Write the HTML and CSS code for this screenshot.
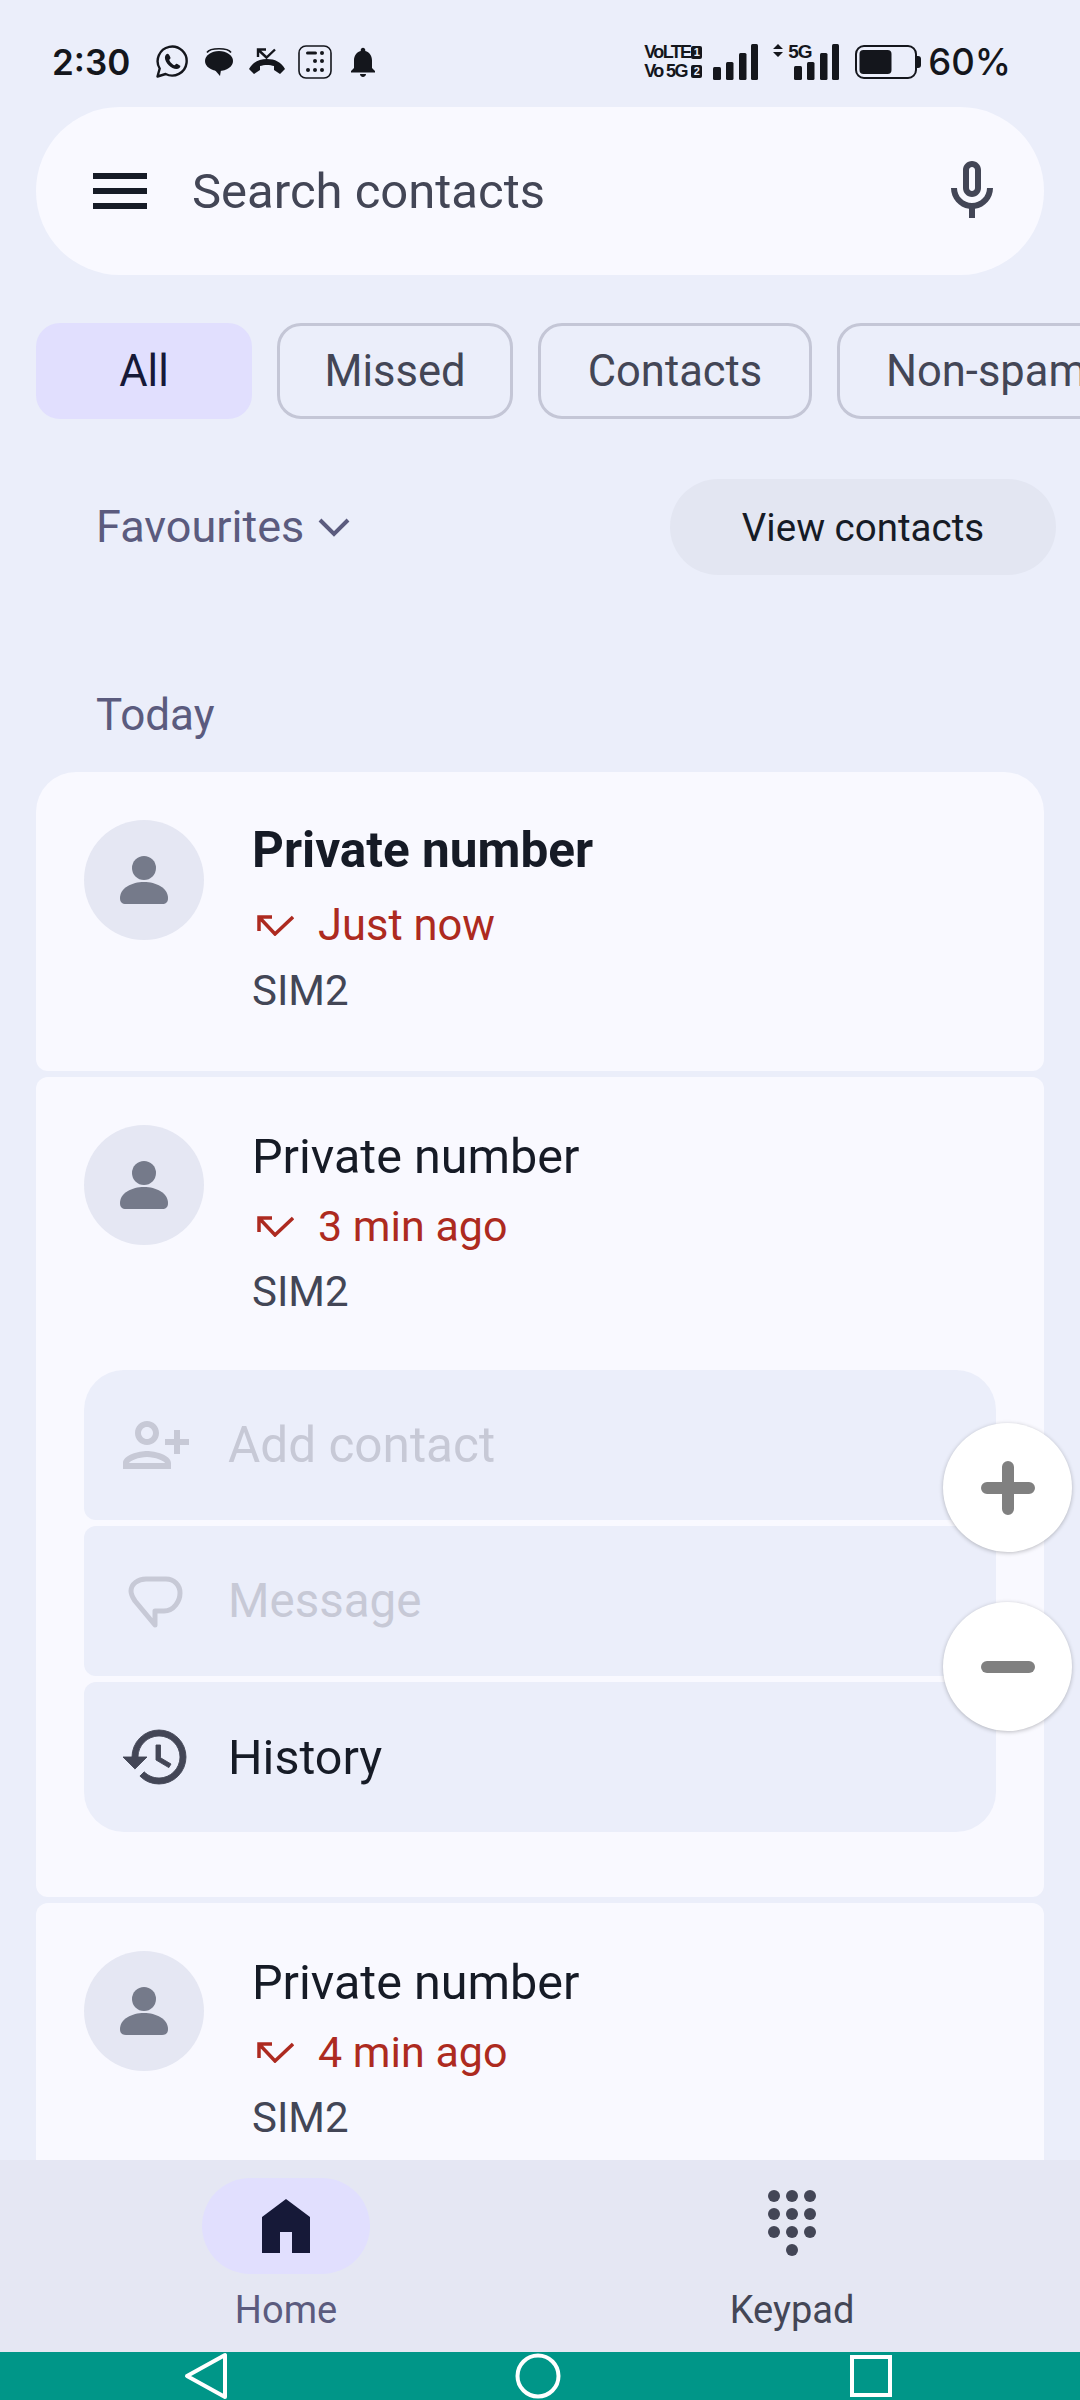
FILE: index.html
```html
<!DOCTYPE html>
<html lang="en">
<head>
  <meta charset="UTF-8" />
  <meta name="viewport" content="width=device-width, initial-scale=1.0" />
  <title>Phone - Home</title>
  <link rel="stylesheet" href="styles.css">
</head>
<body>
  <div class="page">
    <!-- status bar -->
    <div class="status">
      <span class="clock">2:30</span>
      <div class="status-icons">
        <svg width="34" height="34" viewBox="0 0 34 34"><path d="M2.500 31.500l2.200-8A14.500 14.500 0 1 1 10.600 29z" fill="none" stroke="#14161c" stroke-width="2.400" stroke-linejoin="round"/><path d="M12.600 8.800c-.9 0-2.700 1.400-2.700 3.900 0 4.700 6.400 11.400 11.600 11.400 2.400 0 3.900-1.900 3.900-3 0-.6-3.500-2.400-4-2.400-.6 0-1.300 1.500-2 1.500-1.500 0-5.100-3.800-5.100-5.100 0-.8 1.300-1.300 1.300-2 0-.5-1.600-4.300-3-4.300z" fill="#14161c"/></svg>
        <svg width="28" height="28" viewBox="0 0 28 28"><path d="M2 4.500C4 1.500 9 .8 14 .8s10 .7 12 3.700" fill="none" stroke="#14161c" stroke-width="1.600"/><ellipse cx="14" cy="13" rx="14" ry="10" fill="#14161c"/><path d="M9 21l6 7 1-6z" fill="#14161c"/></svg>
        <svg width="36" height="28" viewBox="0 0 36 28"><path d="M9 9V1.500h8M9.500 2l8 7.500L26 1.500" fill="none" stroke="#14161c" stroke-width="2.400"/><path d="M0 21c4-7 10-10 18-10s14 3 18 10l-5 5-6-4v-4c-4-1.500-10-1.500-14 0v4l-6 4z" fill="#14161c"/></svg>
        <svg class="dial-box" width="34" height="34" viewBox="0 0 34 34"><rect x="1" y="1" width="32" height="32" rx="7" fill="none" stroke="#14161c" stroke-width="1.600"/><g fill="#14161c"><rect x="8" y="6.500" width="11" height="3" rx="1.500"/><circle cx="24" cy="8" r="2"/><circle cx="24" cy="16" r="2"/><circle cx="17" cy="25" r="2"/><circle cx="24" cy="25" r="2"/><circle cx="10" cy="25" r="2"/><circle cx="17" cy="16" r="2"/></g></svg>
        <svg class="bell" width="36" height="36" viewBox="0 0 24 24"><path fill="#14161c" d="M12 22c1.100 0 2-.9 2-2h-4c0 1.100.89 2 2 2zm6-6v-5c0-3.070-1.640-5.640-4.500-6.320V4c0-.83-.67-1.500-1.500-1.500s-1.500.67-1.500 1.500v.68C7.630 5.360 6 7.920 6 11v5l-2 2v1h16v-1l-2-2z"/></svg>
      </div>
      <div class="status-right">
        <div class="volte">
          <div class="volte-line">VoLTE<span class="sim-badge">1</span></div>
          <div class="volte-line">Vo 5G<span class="sim-badge">2</span></div>
        </div>
        <svg class="signal-one" width="45" height="36" viewBox="0 0 45 36"><g fill="#14161c"><rect x="0" y="23" width="8" height="13" rx="1.500"/><rect x="13" y="18" width="7.500" height="18" rx="1.500"/><rect x="26" y="9" width="7.500" height="27" rx="1.500"/><rect x="38" y="0" width="7" height="36" rx="1.500"/></g></svg>
        <div class="signal-two">
          <svg class="data-arrows" width="10" height="13" viewBox="0 0 10 13"><path fill="#14161c" d="M5 0l5 5H0zM0 8h10l-5 5z"/></svg>
          <span class="fiveg">5G</span>
          <svg class="signal-bars" width="45" height="36" viewBox="0 0 45 36"><g fill="#14161c"><rect x="0" y="22" width="8" height="14" rx="1.500"/><rect x="13" y="18" width="7.500" height="18" rx="1.500"/><rect x="26" y="9" width="7.500" height="27" rx="1.500"/><rect x="38" y="0" width="7" height="36" rx="1.500"/></g></svg>
        </div>
        <svg class="battery" width="66" height="34" viewBox="0 0 66 34"><rect x="1" y="1" width="60" height="32" rx="8" fill="none" stroke="#14161c" stroke-width="2"/><rect x="4.500" y="5" width="32" height="24" rx="4" fill="#14161c"/><path d="M62 11h1a3 3 0 0 1 3 3v6a3 3 0 0 1-3 3h-1z" fill="#14161c"/></svg>
        <span class="percent">60%</span>
      </div>
    </div>

    <!-- search -->
    <div class="search">
      <div class="hamburger"><span></span><span></span><span></span></div>
      <span class="search-text">Search contacts</span>
      <svg class="mic" width="72" height="72" viewBox="0 0 24 24"><path fill="#434656" d="M12 14c1.660 0 3-1.340 3-3V5c0-1.660-1.340-3-3-3S9 3.340 9 5v6c0 1.660 1.340 3 3 3zm-1-9c0-.55.45-1 1-1s1 .45 1 1v6c0 .55-.45 1-1 1s-1-.45-1-1V5zm6 6c0 2.760-2.240 5-5 5s-5-2.240-5-5H5c0 3.530 2.610 6.430 6 6.920V21h2v-3.080c3.390-.49 6-3.390 6-6.920h-2z"/></svg>
    </div>

    <!-- filter chips -->
    <div class="chips">
      <div class="chip chip-active">All</div>
      <div class="chip chip-missed">Missed</div>
      <div class="chip chip-contacts">Contacts</div>
      <div class="chip">Non-spam</div>
    </div>

    <div class="fav-row">
      <div class="fav">
        <span>Favourites</span>
        <svg width="32" height="19" viewBox="0 0 32 19"><path d="M2 2l14 14L30 2" fill="none" stroke="#5b5b7e" stroke-width="4"/></svg>
      </div>
      <div class="view-btn">View contacts</div>
    </div>

    <div class="day-label">Today</div>

    <!-- call log -->
    <div class="list">
      <div class="card card-first">
        <div class="call">
          <div class="avatar"><svg width="120" height="120" viewBox="0 0 120 120"><circle cx="60" cy="48" r="12" fill="#757a8a"/><path d="M36 78c0-10 12-16 24-16s24 6 24 16c0 4-2 6-6 6H42c-4 0-6-2-6-6z" fill="#757a8a"/></svg></div>
          <div class="call-text unread">
            <div class="call-name">Private number</div>
            <div class="call-time"><svg width="37" height="21" viewBox="0 0 37 21"><path d="M15 2H2v14M2 2l16 17L36 2" fill="none" stroke="#ad2a20" stroke-width="3.500"/></svg><span>Just now</span></div>
            <div class="call-sim">SIM2</div>
          </div>
        </div>
      </div>

      <div class="card card-open">
        <div class="call">
          <div class="avatar"><svg width="120" height="120" viewBox="0 0 120 120"><circle cx="60" cy="48" r="12" fill="#757a8a"/><path d="M36 78c0-10 12-16 24-16s24 6 24 16c0 4-2 6-6 6H42c-4 0-6-2-6-6z" fill="#757a8a"/></svg></div>
          <div class="call-text">
            <div class="call-name">Private number</div>
            <div class="call-time"><svg width="37" height="21" viewBox="0 0 37 21"><path d="M15 2H2v14M2 2l16 17L36 2" fill="none" stroke="#ad2a20" stroke-width="3.500"/></svg><span>3 min ago</span></div>
            <div class="call-sim">SIM2</div>
          </div>
        </div>
        <div class="actions">
          <div class="action action-off action-add">
            <svg width="72" height="72" viewBox="0 0 24 24"><path class="flip" fill="#c7c9d6" d="M15 12c2.210 0 4-1.790 4-4s-1.790-4-4-4-4 1.790-4 4 1.790 4 4 4zm0-6c1.100 0 2 .9 2 2s-.9 2-2 2-2-.9-2-2 .9-2 2-2zm0 8c-2.670 0-8 1.340-8 4v2h16v-2c0-2.660-5.330-4-8-4zm-6 4c.22-.72 3.310-2 6-2 2.700 0 5.800 1.290 6 2H9zm-3-3v-3h3v-2H6V7H4v3H1v2h3v3h2z"/></svg>
            <span>Add contact</span>
          </div>
          <div class="action action-off action-msg">
            <svg width="72" height="72" viewBox="0 0 72 72"><path d="M26 14h20c8 0 14 6 14 14s-6 18-16 18h-9v14L15 36c-2-3-4-7-4-10 0-7 7-12 15-12z" fill="none" stroke="#c7c9d6" stroke-width="5" stroke-linejoin="round"/></svg>
            <span>Message</span>
          </div>
          <div class="action">
            <svg width="72" height="72" viewBox="0 0 24 24"><path fill="#434656" stroke="#434656" stroke-width=".3" d="M13 3a9 9 0 0 0-9 9H1l3.890 3.890.07.14L9 12H6c0-3.870 3.130-7 7-7s7 3.130 7 7-3.130 7-7 7c-1.930 0-3.680-.79-4.940-2.060l-1.420 1.420A8.954 8.954 0 0 0 13 21a9 9 0 0 0 0-18zm-1 5v5l4.280 2.540.72-1.210-3.500-2.080V8H12z"/></svg>
            <span>History</span>
          </div>
        </div>
      </div>

      <div class="card card-last">
        <div class="call">
          <div class="avatar"><svg width="120" height="120" viewBox="0 0 120 120"><circle cx="60" cy="48" r="12" fill="#757a8a"/><path d="M36 78c0-10 12-16 24-16s24 6 24 16c0 4-2 6-6 6H42c-4 0-6-2-6-6z" fill="#757a8a"/></svg></div>
          <div class="call-text">
            <div class="call-name">Private number</div>
            <div class="call-time"><svg width="37" height="21" viewBox="0 0 37 21"><path d="M15 2H2v14M2 2l16 17L36 2" fill="none" stroke="#ad2a20" stroke-width="3.500"/></svg><span>4 min ago</span></div>
            <div class="call-sim">SIM2</div>
          </div>
        </div>
      </div>
    </div>

    <!-- bottom tabs -->
    <div class="tabs">
      <div class="tab">
        <div class="tab-icon tab-icon-active"><svg width="72" height="72" viewBox="0 0 24 24"><path fill="#161938" d="M4 21V9l8-6 8 6v12h-6v-7h-4v7z"/></svg></div>
        <div class="tab-label tab-label-active">Home</div>
      </div>
      <div class="tab">
        <div class="tab-icon"><svg width="54" height="72" viewBox="0 0 54 72"><g fill="#434656"><circle cx="9" cy="6" r="6"/><circle cx="27" cy="6" r="6"/><circle cx="45" cy="6" r="6"/><circle cx="9" cy="24" r="6"/><circle cx="27" cy="24" r="6"/><circle cx="45" cy="24" r="6"/><circle cx="9" cy="42" r="6"/><circle cx="27" cy="42" r="6"/><circle cx="45" cy="42" r="6"/><circle cx="27" cy="60" r="6"/></g></svg></div>
        <div class="tab-label">Keypad</div>
      </div>
    </div>

    <!-- system nav -->
    <div class="sysnav">
      <svg width="48" height="48" viewBox="0 0 48 48"><path d="M44 3v42L6 24z" fill="none" stroke="#fff" stroke-width="4" stroke-linejoin="round"/></svg>
      <svg width="48" height="48" viewBox="0 0 48 48"><circle cx="24" cy="24" r="20.500" fill="none" stroke="#fff" stroke-width="4"/></svg>
      <svg width="48" height="48" viewBox="0 0 48 48"><rect x="5" y="5" width="38" height="38" fill="none" stroke="#fff" stroke-width="4"/></svg>
    </div>

    <!-- floating zoom buttons -->
    <div class="zoom-btns">
      <div class="zoom-btn"><svg width="54" height="54" viewBox="0 0 54 54"><path d="M27 6v42M6 27h42" stroke="#808080" stroke-width="12" stroke-linecap="round"/></svg></div>
      <div class="zoom-btn"><svg width="54" height="54" viewBox="0 0 54 54"><path d="M6 27h42" stroke="#808080" stroke-width="12" stroke-linecap="round"/></svg></div>
    </div>
  </div>
</body>
</html>
```

FILE: styles.css
```css
/* Phone app home screen */
* { box-sizing: border-box; }
html, body { margin: 0; padding: 0; }
body {
  font-family: "Roboto", "Noto Sans", sans-serif;
  background: #ebeefa;
  color: #161b26;
}
.page {
  position: relative;
  width: 1080px;
  height: 2400px;
  overflow: hidden;
  display: flex;
  flex-direction: column;
}

/* status bar */
.status {
  height: 107px;
  flex-shrink: 0;
  display: flex;
  align-items: center;
  padding: 17px 69px 0 52px;
  color: #14161c;
}
.clock { font-family: "Inter", sans-serif; font-size: 35px; font-weight: 600; width: 103px; }
.status-icons { display: flex; align-items: center; gap: 16px; }
.dial-box, .bell { margin-left: -3px; }
.status-right { display: flex; align-items: center; margin-left: auto; }
.volte { width: 69px; }
.volte-line {
  display: flex;
  align-items: center;
  font-family: "Liberation Sans", sans-serif;
  font-weight: bold;
  font-size: 18px;
  line-height: 19px;
  letter-spacing: -1.6px;
  justify-content: space-between;
  width: 58px;
}
.sim-badge {
  width: 11px;
  height: 13px;
  background: #14161c;
  color: #ebeefa;
  font-size: 11px;
  line-height: 13px;
  text-align: center;
  border-radius: 2px;
  letter-spacing: 0;
}
.signal-two { position: relative; width: 66px; height: 36px; margin-left: 15px; }
.data-arrows { position: absolute; left: 0; top: 0; }
.fiveg {
  position: absolute;
  left: 15px;
  top: -3px;
  font-family: "Liberation Sans", sans-serif;
  font-weight: bold;
  font-size: 19px;
  letter-spacing: -1px;
}
.signal-bars { position: absolute; left: 21px; top: 0; }
.battery { margin-left: 16px; }
.percent { font-family: "Inter", sans-serif; font-size: 36.500px; font-weight: 500; margin-left: 7px; }

/* search */
.search {
  height: 168px;
  flex-shrink: 0;
  margin: 0 36px;
  background: #f9f9ff;
  border-radius: 84px;
  display: flex;
  align-items: center;
  padding: 0 36px 0 57px;
}
.hamburger { width: 54px; display: flex; flex-direction: column; gap: 9px; }
.hamburger span { height: 6px; background: #161b26; }
.search-text { font-size: 49px; color: #434656; margin-left: 45px; }
.mic { margin-left: auto; }

/* chips */
.chips {
  display: flex;
  gap: 25px;
  margin: 48px 0 0 36px;
  flex-shrink: 0;
}
.chip {
  height: 96px;
  flex-shrink: 0;
  border: 3px solid #c4c6d6;
  border-radius: 24px;
  padding: 0 46px;
  font-size: 43.500px;
  color: #434656;
  display: flex;
  align-items: center;
  justify-content: center;
}
.chip-missed { width: 236px; padding: 0; }
.chip-contacts { width: 274px; padding: 0; }
.chip-active {
  width: 216px;
  background: #e1dffe;
  border-color: #e1dffe;
  color: #161938;
}

.fav-row {
  height: 96px;
  flex-shrink: 0;
  margin-top: 60px;
  display: flex;
  align-items: center;
  justify-content: space-between;
  padding: 0 24px 0 96px;
}
.fav { display: flex; align-items: center; gap: 14px; font-size: 45px; line-height: 94px; color: #5b5b7e; }
.view-btn {
  height: 96px;
  width: 386px;
  border-radius: 48px;
  background: #e3e6f2;
  display: flex;
  align-items: center;
  justify-content: center;
  font-size: 38.500px;
}
.day-label {
  height: 50px;
  line-height: 53px;
  margin: 114px 0 33px 96px;
  font-size: 44px;
  color: #5b5b7e;
  flex-shrink: 0;
}

/* call log */
.list {
  flex: 1;
  overflow: hidden;
  padding: 0 36px;
  display: flex;
  flex-direction: column;
  gap: 6px;
}
.card {
  background: #f9f9ff;
  border-radius: 12px;
  padding: 48px 48px 0;
  flex-shrink: 0;
}
.card-first { height: 299px; border-radius: 40px 40px 12px 12px; }
.card-open { height: 820px; }
.card-last { height: 300px; }
.call { display: flex; gap: 48px; }
.avatar {
  width: 120px;
  height: 120px;
  border-radius: 50%;
  background: #e5e7f3;
  flex-shrink: 0;
}
.avatar svg { display: block; }
.call-name { font-size: 48.500px; line-height: 58px; margin-top: 3px; }
.call-time {
  display: flex;
  align-items: center;
  gap: 24px;
  height: 58px;
  margin-top: 11px;
  font-size: 43px;
  color: #ad2a20;
}
.call-time svg { margin-left: 5px; }
.call-sim { font-size: 42px; line-height: 58px; margin-top: 8px; color: #434656; }
.unread .call-name { font-size: 49.500px; font-weight: 700; margin-top: 1px; }
.unread .call-time { margin-top: 17px; font-size: 43.500px; }
.unread .call-sim { margin-top: 8px; }

.actions {
  margin-top: 49px;
  display: flex;
  flex-direction: column;
  gap: 6px;
}
.action {
  height: 150px;
  background: #ebeefa;
  border-radius: 12px;
  display: flex;
  align-items: center;
  gap: 36px;
  padding-left: 36px;
  font-size: 48.500px;
}
.action:first-child { border-radius: 40px 40px 12px 12px; }
.action:last-child { border-radius: 12px 12px 40px 40px; }
.action-off { color: #c7c9d6; }
.action-add { font-size: 49.500px; }
.action-msg { font-size: 47.500px; }
.flip { transform: scaleX(-1); transform-origin: 12px 12px; }

/* bottom tabs */
.tabs {
  height: 192px;
  flex-shrink: 0;
  background: #e5e7f3;
  display: flex;
  padding: 18px 35px 0 33px;
}
.tab { flex: 1; display: flex; flex-direction: column; align-items: center; }
.tab-icon {
  width: 168px;
  height: 96px;
  border-radius: 48px;
  display: flex;
  align-items: center;
  justify-content: center;
}
.tab-icon-active { background: #e1dffe; }
.tab-label { margin-top: 12px; line-height: 48px; font-size: 38px; color: #434656; }
.tab-label-active { color: #5b5b7e; }

/* system nav */
.sysnav {
  height: 48px;
  flex-shrink: 0;
  background: #009688;
  display: flex;
  gap: 285px;
  padding-left: 181px;
}

/* zoom buttons float over the list */
.zoom-btns {
  position: absolute;
  top: 1423px;
  right: 8px;
  display: flex;
  flex-direction: column;
  gap: 50px;
}
.zoom-btn {
  width: 129px;
  height: 129px;
  border-radius: 50%;
  background: #fff;
  box-shadow: 0 1px 4px rgba(0, 0, 0, 0.25);
  display: flex;
  align-items: center;
  justify-content: center;
}
```
